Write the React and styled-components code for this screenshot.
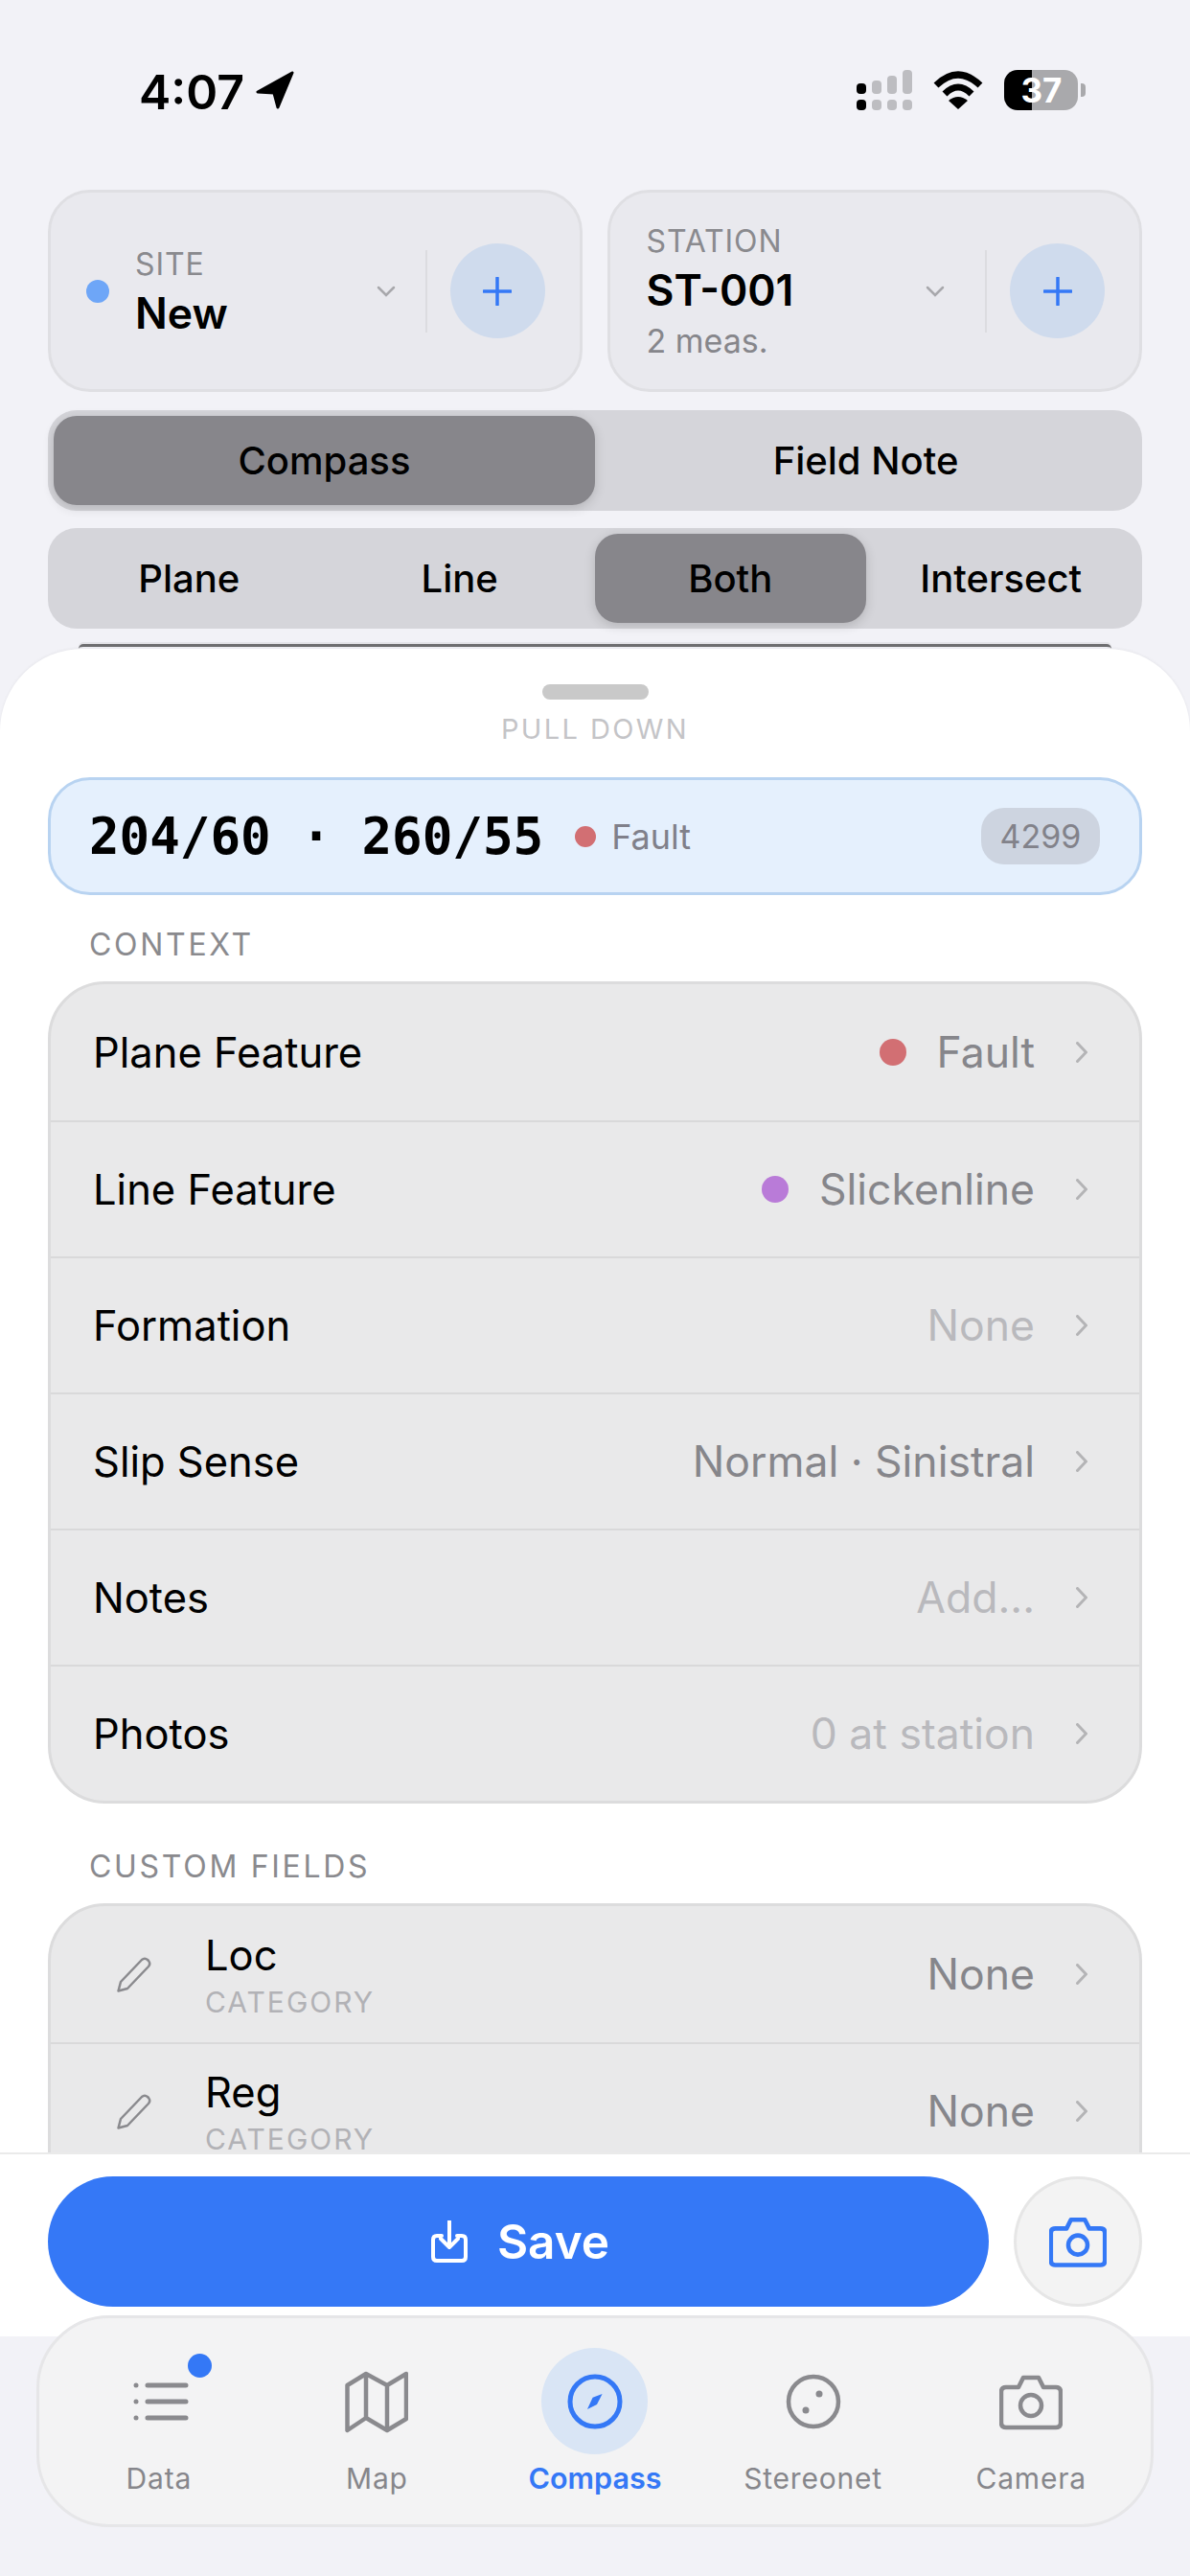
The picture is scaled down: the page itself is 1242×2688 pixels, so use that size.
import React from "react";
import styled, { createGlobalStyle } from "styled-components";

const GlobalStyle = createGlobalStyle`
  html, body {
    margin: 0;
    padding: 0;
    background: #f2f2f7;
  }
  body {
    font-family: Inter, "Noto Sans", sans-serif;
    color: #000;
  }
`;

const Page = styled.div`
  position: relative;
  width: 1242px;
  height: 2688px;
  display: flex;
  flex-direction: column;
  overflow: hidden;
  background: #f2f2f7;
`;

const StatusBar = styled.div`
  height: 198px;
  box-sizing: border-box;
  padding: 73px 109px 0 145px;
  display: flex;
  justify-content: space-between;
  align-items: flex-start;
`;

const StatusLeft = styled.div`
  display: flex;
  align-items: center;
  gap: 12px;
  height: 42px;
`;

const Time = styled.span`
  font-size: 50px;
  font-weight: 600;
  line-height: 42px;
  margin-top: 3px;
`;

const StatusRight = styled.div`
  display: flex;
  align-items: center;
  gap: 22px;
  height: 42px;
`;

const Signal = styled.div`
  display: flex;
  gap: 6px;
  height: 42px;
  align-items: flex-end;
`;

const SignalBar = styled.div`
  width: 10px;
  height: 42px;
  display: flex;
  flex-direction: column;
  justify-content: flex-end;
  gap: 6px;
`;

const SignalPart = styled.div`
  width: 10px;
  height: ${(p) => p.$h}px;
  border-radius: 4px;
  background: ${(p) => (p.$on ? "#000" : "#bdbdc1")};
`;

const Battery = styled.div`
  display: flex;
  align-items: center;
  gap: 3px;
`;

const BatteryBody = styled.div`
  width: 77px;
  height: 42px;
  border-radius: 14px;
  background: linear-gradient(90deg, #000 38%, #a9a9ac 38%);
  color: #fff;
  font-size: 35px;
  font-weight: 700;
  line-height: 42px;
  text-align: center;
  padding-left: 1px;
  box-sizing: border-box;
`;

const BatteryTip = styled.div`
  width: 5px;
  height: 14px;
  background: #a9a9ac;
  border-radius: 0 4px 4px 0;
`;

const Header = styled.div`
  padding: 0 50px;
  display: flex;
  flex-direction: column;
`;

const Pickers = styled.div`
  display: flex;
  gap: 26px;
`;

const Picker = styled.div`
  flex: 1;
  height: 211px;
  box-sizing: border-box;
  padding: 0 36px 0 ${(p) => (p.$dot ? 37 : 38)}px;
  display: flex;
  align-items: center;
  background: #e9e9ee;
  border: 3px solid #dfdfe3;
  border-radius: 44px;
`;

const SiteDot = styled.div`
  width: 24px;
  height: 24px;
  border-radius: 50%;
  background: #6ea6f7;
  margin-right: 27px;
  flex-shrink: 0;
`;

const PickerText = styled.div`
  flex: 1;
  display: flex;
  flex-direction: column;
  gap: 4px;
  padding-top: ${(p) => p.$top}px;
`;

const PickerLabel = styled.div`
  font-size: 32px;
  line-height: 36px;
  color: #8a8a8e;
  letter-spacing: 0.9px;
`;

const PickerValue = styled.div`
  font-size: 44.5px;
  line-height: 58px;
  font-weight: 600;
`;

const PickerSub = styled.div`
  font-size: 34px;
  line-height: 40px;
  color: #86868b;
`;

const PickerDivider = styled.div`
  width: 2px;
  height: 86px;
  background: #dcdce0;
  margin: 0 24px 0 ${(p) => p.$gap}px;
`;

const AddButton = styled.div`
  width: 99px;
  height: 99px;
  border-radius: 50%;
  background: #cfdbed;
  display: flex;
  align-items: center;
  justify-content: center;
  flex-shrink: 0;
`;

const Segments = styled.div`
  margin-top: ${(p) => p.$top}px;
  height: 105px;
  box-sizing: border-box;
  padding: 6px;
  display: grid;
  grid-template-columns: repeat(${(p) => p.$count}, 1fr);
  background: #d5d5da;
  border-radius: 30px;
`;

const Segment = styled.div`
  display: flex;
  align-items: center;
  justify-content: center;
  font-size: 40px;
  font-weight: 500;
  border-radius: 24px;
  background: ${(p) => (p.$active ? "#87868b" : "transparent")};
  box-shadow: ${(p) => (p.$active ? "0 3px 12px rgba(0,0,0,0.16)" : "none")};
`;

const Peek = styled.div`
  margin: 16px 82px 0;
  height: 5px;
  box-sizing: border-box;
  border-top: 3px solid #6e6e70;
  border-radius: 16px 16px 0 0;
  box-shadow: 0 -2px 0 #e4e4e8;
  flex-shrink: 0;
`;

const Sheet = styled.div`
  height: 1761px;
  flex-shrink: 0;
  display: flex;
  flex-direction: column;
  background: #fff;
  border-radius: 86px 86px 0 0;
  box-shadow: 0 -1px 3px rgba(0, 0, 0, 0.05);
  overflow: hidden;
  position: relative;
`;

const Handle = styled.div`
  width: 111px;
  height: 16px;
  margin: 37px auto 0;
  border-radius: 8px;
  background: #c9c9c9;
`;

const PullDown = styled.div`
  margin-top: 14px;
  text-align: center;
  font-size: 29px;
  line-height: 34px;
  letter-spacing: 2.4px;
  color: #c4c4c7;
`;

const Scroll = styled.div`
  flex: 1;
  min-height: 0;
  overflow: hidden;
  padding: 33px 50px 0;
`;

const Reading = styled.div`
  height: 123px;
  box-sizing: border-box;
  display: flex;
  align-items: center;
  padding: 0 41px 0 40px;
  background: #e5f0fd;
  border: 3px solid #b8d3f1;
  border-radius: 44px;
`;

const ReadingValue = styled.span`
  font-family: "DejaVu Sans Mono", "Liberation Mono", monospace;
  font-weight: 700;
  font-size: 52.5px;
  margin-right: 33px;
  white-space: pre;
`;

const Dot = styled.span`
  width: ${(p) => p.$size}px;
  height: ${(p) => p.$size}px;
  border-radius: 50%;
  background: ${(p) => p.$color};
  flex-shrink: 0;
`;

const ReadingFeature = styled.span`
  flex: 1;
  margin-left: 16px;
  font-size: 36px;
  color: #80808a;
`;

const CountPill = styled.span`
  width: 124px;
  height: 59px;
  border-radius: 24px;
  background: #cdd4e0;
  color: #82828a;
  font-size: 34px;
  display: flex;
  align-items: center;
  justify-content: center;
`;

const SectionLabel = styled.div`
  margin: ${(p) => p.$top}px 0 20px 43px;
  font-size: 32px;
  line-height: 36px;
  letter-spacing: 2.7px;
  color: #8a8a8e;
`;

// the custom fields list runs on under the footer, so its round bottom never shows
const ListCard = styled.div`
  background: #e9e9ea;
  border: 3px solid #dcdcdd;
  border-radius: 60px;
  overflow: hidden;
  padding-bottom: ${(p) => (p.$runsOn ? 120 : 0)}px;
`;

const Row = styled.div`
  height: 142px;
  box-sizing: border-box;
  display: flex;
  align-items: center;
  padding: 0 54px 0 ${(p) => (p.$custom ? 69 : 44)}px;
  border-top: ${(p) => (p.$first ? "none" : "2px solid #d9d9da")};
`;

const RowLabel = styled.div`
  font-size: 43.5px;
  line-height: 50px;
  flex: 1;
`;

const RowValue = styled.div`
  font-size: 44.5px;
  color: ${(p) => (p.$muted ? "#b9b9bd" : "#86868b")};
  margin-right: 43px;
`;

const FieldText = styled.div`
  flex: 1;
  margin-left: 56px;
  display: flex;
  flex-direction: column;
  gap: 5px;
`;

const FieldName = styled.div`
  font-size: 43.5px;
  line-height: 52px;
`;

const FieldKind = styled.div`
  font-size: 30px;
  line-height: 36px;
  letter-spacing: 2px;
  color: #b2b2b6;
`;

const ValueDot = styled(Dot)`
  margin-right: 32px;
`;

const Footer = styled.div`
  height: 192px;
  flex-shrink: 0;
  box-sizing: border-box;
  padding: 23px 50px 0;
  display: flex;
  gap: 26px;
  align-items: flex-start;
  border-top: 2px solid #eaeaea;
  background: #fff;
`;

const SaveButton = styled.div`
  flex: 1;
  height: 136px;
  border-radius: 68px;
  background: #3578f6;
  color: #fff;
  display: flex;
  align-items: center;
  justify-content: center;
  gap: 31px;
  font-size: 49.5px;
  font-weight: 600;
  padding-left: 4px;
`;

const CameraButton = styled.div`
  width: 134px;
  height: 136px;
  box-sizing: border-box;
  border-radius: 50%;
  background: #f3f3f3;
  border: 3px solid #e6e6e6;
  display: flex;
  align-items: center;
  justify-content: center;
`;

const TabBar = styled.div`
  position: absolute;
  left: 38px;
  right: 38px;
  bottom: 51px;
  height: 221px;
  box-sizing: border-box;
  padding: 31px 11px 0;
  display: grid;
  grid-template-columns: repeat(5, 1fr);
  background: #f3f3f4;
  border: 3px solid #e6e6e8;
  border-radius: 76px;
`;

const Tab = styled.div`
  display: flex;
  flex-direction: column;
  align-items: center;
`;

const TabIcon = styled.div`
  position: relative;
  width: 111px;
  height: 111px;
  border-radius: 50%;
  background: ${(p) => (p.$active ? "#d9e5f5" : "transparent")};
  display: flex;
  align-items: center;
  justify-content: center;
`;

const Badge = styled.span`
  position: absolute;
  top: 6px;
  right: 0;
  width: 25px;
  height: 25px;
  border-radius: 50%;
  background: #3478f6;
`;

const TabLabel = styled.div`
  margin-top: 7px;
  font-size: ${(p) => (p.$active ? 30.5 : 30)}px;
  line-height: 36px;
  letter-spacing: ${(p) => (p.$active ? 0 : 0.8)}px;
  font-weight: ${(p) => (p.$active ? 600 : 400)};
  color: ${(p) => (p.$active ? "#3478f6" : "#86868b")};
`;

const GREY = "#8a8a8e";
const BLUE = "#3478f6";

const LocationArrow = () => (
  <svg width="40" height="40" viewBox="0 0 40 40">
    <path
      d="M38 2 L2 22 L19 23 L23 38 Z"
      fill="#000"
      stroke="#000"
      strokeWidth="3"
      strokeLinejoin="round"
    />
  </svg>
);

const Wifi = () => (
  <svg width="52" height="40" viewBox="0 0 52 40">
    <path d="M3 15 Q26 -7 49 15" fill="none" stroke="#000" strokeWidth="7" />
    <path d="M12 24 Q26 10 40 24" fill="none" stroke="#000" strokeWidth="7" />
    <path d="M26 40 L16 31 Q26 23 36 31 Z" fill="#000" />
  </svg>
);

const PlusIcon = () => (
  <svg width="30" height="30" viewBox="0 0 30 30">
    <path d="M15 1 V29 M1 15 H29" stroke={BLUE} strokeWidth="3.5" strokeLinecap="round" />
  </svg>
);

const ChevronDown = () => (
  <svg width="20" height="12" viewBox="0 0 20 12">
    <path d="M2 2 L10 10 L18 2" fill="none" stroke="#a8a8ac" strokeWidth="2.5" strokeLinecap="round" />
  </svg>
);

const ChevronRight = () => (
  <svg width="12" height="22" viewBox="0 0 12 22">
    <path d="M1.5 1.5 L10.5 11 L1.5 20.5" fill="none" stroke="#b4b4b6" strokeWidth="3" strokeLinecap="round" />
  </svg>
);

const Pencil = () => (
  <svg width="36" height="37" viewBox="0 0 36 37">
    <path
      d="M1.5 35.5 L4 26 L26 3 Q29 0.5 32 3 L33 4 Q35.5 7 33 10 L11 33 Z"
      fill="none"
      stroke={GREY}
      strokeWidth="2.5"
      strokeLinejoin="round"
    />
  </svg>
);

const SaveIcon = () => (
  <svg width="38" height="44" viewBox="0 0 38 44">
    <path
      d="M19 1 V28 M10 19 L19 28 L28 19 M11 16 H6 Q2 16 2 20 V38 Q2 42 6 42 H32 Q36 42 36 38 V20 Q36 16 32 16 H27"
      fill="none"
      stroke="#fff"
      strokeWidth="4"
      strokeLinecap="round"
      strokeLinejoin="round"
    />
  </svg>
);

const CameraIcon = ({ size, color, weight }) => (
  <svg width={size} height={size} viewBox="0 0 66 66">
    <path
      d="M7 18 H20 L25 8 H41 L46 18 H59 Q64 18 64 23 V55 Q64 60 59 60 H7 Q2 60 2 55 V23 Q2 18 7 18 Z"
      fill="none"
      stroke={color}
      strokeWidth={weight}
      strokeLinejoin="round"
    />
    <circle cx="33" cy="37" r="11" fill="none" stroke={color} strokeWidth={weight} />
  </svg>
);

const ListIcon = () => (
  <svg width="66" height="66" viewBox="0 0 66 66">
    <path d="M21 16 H61 M21 33 H61 M21 50 H61" stroke={GREY} strokeWidth="5" strokeLinecap="round" />
    <circle cx="9" cy="16" r="2.5" fill={GREY} />
    <circle cx="9" cy="33" r="2.5" fill={GREY} />
    <circle cx="9" cy="50" r="2.5" fill={GREY} />
  </svg>
);

const MapIcon = () => (
  <svg width="66" height="66" viewBox="0 0 66 66">
    <path
      d="M2.5 16 L22 4 L44 16 L64 4 V51 L44 63 L22 50 L2.5 63 Z M22 4 V50 M44 16 V63"
      fill="none"
      stroke={GREY}
      strokeWidth="4.5"
      strokeLinejoin="round"
    />
  </svg>
);

const CompassIcon = () => (
  <svg width="66" height="66" viewBox="0 0 66 66">
    <circle cx="33" cy="33" r="26" fill="none" stroke={BLUE} strokeWidth="5" />
    <path d="M40.6 25 L35 36 L25 41 L30.6 28.7 Z" fill={BLUE} />
  </svg>
);

const StereonetIcon = () => (
  <svg width="66" height="66" viewBox="0 0 66 66">
    <circle cx="33" cy="33" r="26" fill="none" stroke={GREY} strokeWidth="4.5" />
    <circle cx="39" cy="25" r="3.5" fill={GREY} />
    <circle cx="25" cy="42" r="3.5" fill={GREY} />
  </svg>
);

const signalBars = [
  { top: 11, on: true },
  { top: 14, on: false },
  { top: 19, on: false },
  { top: 25, on: false },
];

const contextRows = [
  { label: "Plane Feature", value: "Fault", dot: "#d26f73" },
  { label: "Line Feature", value: "Slickenline", dot: "#b97bd8" },
  { label: "Formation", value: "None", muted: true },
  { label: "Slip Sense", value: "Normal · Sinistral" },
  { label: "Notes", value: "Add...", muted: true },
  { label: "Photos", value: "0 at station", muted: true },
];

const customRows = [{ name: "Loc" }, { name: "Reg" }];

const tabs = [
  { label: "Data", icon: <ListIcon />, badge: true },
  { label: "Map", icon: <MapIcon /> },
  { label: "Compass", icon: <CompassIcon />, active: true },
  { label: "Stereonet", icon: <StereonetIcon /> },
  { label: "Camera", icon: <CameraIcon size={66} color={GREY} weight={4.5} /> },
];

export default function App() {
  return (
    <Page>
      <GlobalStyle />
      <StatusBar>
        <StatusLeft>
          <Time>4:07</Time>
          <LocationArrow />
        </StatusLeft>
        <StatusRight>
          <Signal>
            {signalBars.map((bar, i) => (
              <SignalBar key={i}>
                <SignalPart $h={bar.top} $on={bar.on} />
                <SignalPart $h={11} $on={bar.on} />
              </SignalBar>
            ))}
          </Signal>
          <Wifi />
          <Battery>
            <BatteryBody>37</BatteryBody>
            <BatteryTip />
          </Battery>
        </StatusRight>
      </StatusBar>

      <Header>
        <Pickers>
          <Picker $dot>
            <SiteDot />
            <PickerText $top={6}>
              <PickerLabel>SITE</PickerLabel>
              <PickerValue>New</PickerValue>
            </PickerText>
            <ChevronDown />
            <PickerDivider $gap={31} />
            <AddButton>
              <PlusIcon />
            </AddButton>
          </Picker>
          <Picker>
            <PickerText $top={2}>
              <PickerLabel>STATION</PickerLabel>
              <PickerValue>ST-001</PickerValue>
              <PickerSub>2 meas.</PickerSub>
            </PickerText>
            <ChevronDown />
            <PickerDivider $gap={42} />
            <AddButton>
              <PlusIcon />
            </AddButton>
          </Picker>
        </Pickers>
        <Segments $count={2} $top={19}>
          <Segment $active>Compass</Segment>
          <Segment>Field Note</Segment>
        </Segments>
        <Segments $count={4} $top={18}>
          <Segment>Plane</Segment>
          <Segment>Line</Segment>
          <Segment $active>Both</Segment>
          <Segment>Intersect</Segment>
        </Segments>
      </Header>

      <Peek />

      <Sheet>
        <Handle />
        <PullDown>PULL DOWN</PullDown>
        <Scroll>
          <Reading>
            <ReadingValue>204/60 · 260/55</ReadingValue>
            <Dot $size={22} $color="#d26f73" />
            <ReadingFeature>Fault</ReadingFeature>
            <CountPill>4299</CountPill>
          </Reading>

          <SectionLabel $top={34}>CONTEXT</SectionLabel>
          <ListCard>
            {contextRows.map((row, i) => (
              <Row key={row.label} $first={i === 0}>
                <RowLabel>{row.label}</RowLabel>
                {row.dot && <ValueDot $size={28} $color={row.dot} />}
                <RowValue $muted={row.muted}>{row.value}</RowValue>
                <ChevronRight />
              </Row>
            ))}
          </ListCard>

          <SectionLabel $top={48}>CUSTOM FIELDS</SectionLabel>
          <ListCard $runsOn>
            {customRows.map((row, i) => (
              <Row key={row.name} $custom $first={i === 0}>
                <Pencil />
                <FieldText>
                  <FieldName>{row.name}</FieldName>
                  <FieldKind>CATEGORY</FieldKind>
                </FieldText>
                <RowValue>None</RowValue>
                <ChevronRight />
              </Row>
            ))}
          </ListCard>
        </Scroll>
        <Footer>
          <SaveButton>
            <SaveIcon />
            Save
          </SaveButton>
          <CameraButton>
            <CameraIcon size={60} color={BLUE} weight={5} />
          </CameraButton>
        </Footer>
      </Sheet>

      <TabBar>
        {tabs.map((tab) => (
          <Tab key={tab.label}>
            <TabIcon $active={tab.active}>
              {tab.icon}
              {tab.badge && <Badge />}
            </TabIcon>
            <TabLabel $active={tab.active}>{tab.label}</TabLabel>
          </Tab>
        ))}
      </TabBar>
    </Page>
  );
}
